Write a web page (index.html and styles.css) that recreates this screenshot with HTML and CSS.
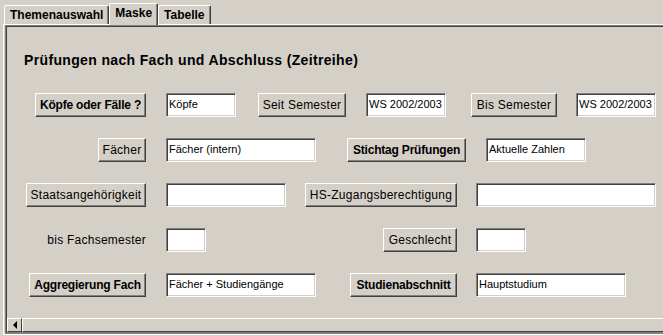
FILE: index.html
```html
<!DOCTYPE html>
<html lang="de">

<head>
    <meta charset="UTF-8" />
    <meta name="viewport" content="width=device-width, initial-scale=1.0" />
    <title>Maske</title>
    <link rel="stylesheet" href="styles.css">
</head>

<body>
    <!-- Reiter -->
    <div class="tabs">
        <div class="tab">Themenauswahl</div>
        <div class="tab active">Maske</div>
        <div class="tab">Tabelle</div>
    </div>

    <div class="pane">
        <div class="scroll">
            <div class="inner">
                <div class="view">
                    <h1 class="title">Prüfungen nach Fach und Abschluss (Zeitreihe)</h1>

                    <div class="rows">
                        <div class="row">
                            <div class="lead"><div class="btn bold w111">Köpfe oder Fälle ?</div></div>
                            <div class="field ml20 w70">Köpfe</div>
                            <div class="btn ml22 w88">Seit Semester</div>
                            <div class="field ml20 w80">WS 2002/2003</div>
                            <div class="btn ml25 w86">Bis Semester</div>
                            <div class="field ml19 w80">WS 2002/2003</div>
                        </div>

                        <div class="row">
                            <div class="lead"><div class="btn w48">Fächer</div></div>
                            <div class="field ml20 w150">Fächer (intern)</div>
                            <div class="btn bold ml31 w119">Stichtag Prüfungen</div>
                            <div class="field ml20 w100">Aktuelle Zahlen</div>
                        </div>

                        <div class="row">
                            <div class="lead"><div class="btn w120">Staatsangehörigkeit</div></div>
                            <div class="field ml20 w120"></div>
                            <div class="btn ml19 w152">HS-Zugangsberechtigung</div>
                            <div class="field ml19 w180"></div>
                        </div>

                        <div class="row">
                            <div class="lead"><span class="label">bis Fachsemester</span></div>
                            <div class="field ml20 w40"></div>
                            <div class="btn ml177 w74">Geschlecht</div>
                            <div class="field ml19 w50"></div>
                        </div>

                        <div class="row">
                            <div class="lead"><div class="btn bold w117">Aggregierung Fach</div></div>
                            <div class="field ml20 w150">Fächer + Studiengänge</div>
                            <div class="btn bold ml34 w107">Studienabschnitt</div>
                            <div class="field ml19 w150">Hauptstudium</div>
                        </div>
                    </div>
                </div>

                <!-- horizontale Bildlaufleiste -->
                <div class="hbar">
                    <div class="arrow"><span class="tri"></span></div>
                    <div class="thumb"></div>
                </div>
            </div>
        </div>
    </div>
</body>

</html>
```

FILE: styles.css
```css
* {
    margin: 0;
    padding: 0;
    box-sizing: border-box;
}

body {
    width: 663px;
    height: 336px;
    overflow: hidden;
    background-color: #d4d0c8;
    font-family: "Liberation Sans", Arial, sans-serif;
    font-size: 12px;
    color: #000;
}

/* Reiter */
.tabs {
    display: flex;
    align-items: flex-end;
    height: 24px;
    padding-left: 4px;
}

.tab {
    height: 19px;
    padding: 0 5px;
    line-height: 18px;
    font-weight: bold;
    border-top: 1px solid #fff;
    border-left: 1px solid #fff;
    border-right: 1px solid #404040;
    border-top-left-radius: 2px;
    border-top-right-radius: 2px;
    box-shadow: inset -1px 0 #808080;
}

.tab.active {
    position: relative;
    z-index: 1;
    height: 22px;
    margin-bottom: -1px;
    padding-top: 1px;
    line-height: 16px;
    background-color: #d4d0c8;
}

/* Inhalt (rechts abgeschnitten, daher ohne rechten Rand) */
.pane {
    margin-left: 3px;
    padding-left: 1px;
    border-top: 1px solid #fff;
    border-left: 1px solid #fff;
    border-bottom: 1px solid #fff;
}

.scroll {
    border: 1px solid;
    border-right: 0;
    border-color: #808080 #fff #808080 #808080;
}

.inner {
    border: 1px solid;
    border-right: 0;
    border-color: #404040 #d4d0c8 #808080 #404040;
}

.view {
    height: 291px;
    padding-top: 25px;
}

.title {
    padding-left: 17px;
    font-size: 14px;
    line-height: 16px;
    font-weight: bold;
    letter-spacing: 0.35px;
}

.rows {
    display: flex;
    flex-direction: column;
    gap: 21px;
    margin-top: 25px;
}

.row {
    display: flex;
    align-items: center;
    height: 24px;
}

.lead {
    display: flex;
    justify-content: flex-end;
    width: 139px;
}

.label {
    letter-spacing: 0.25px;
}

.btn {
    height: 24px;
    line-height: 22px;
    text-align: center;
    white-space: nowrap;
    letter-spacing: 0.25px;
    border: 1px solid;
    border-color: #fff #404040 #404040 #fff;
    box-shadow: inset -1px -1px #808080;
}

.btn.bold {
    font-weight: bold;
    letter-spacing: -0.2px;
}

.field {
    height: 24px;
    padding: 0 2px;
    line-height: 20px;
    font-size: 11px;
    white-space: nowrap;
    background-color: #fff;
    border: 1px solid;
    border-color: #808080 #fff #fff #808080;
    box-shadow: inset 1px 1px #404040, inset -1px -1px #d4d0c8;
}

/* Abstände */
.ml19 { margin-left: 19px; }
.ml20 { margin-left: 20px; }
.ml22 { margin-left: 22px; }
.ml25 { margin-left: 25px; }
.ml31 { margin-left: 31px; }
.ml34 { margin-left: 34px; }
.ml177 { margin-left: 177px; }

/* Breiten */
.w40 { width: 40px; }
.w48 { width: 48px; }
.w50 { width: 50px; }
.w70 { width: 70px; }
.w74 { width: 74px; }
.w80 { width: 80px; }
.w86 { width: 86px; }
.w88 { width: 88px; }
.w100 { width: 100px; }
.w107 { width: 107px; }
.w111 { width: 111px; }
.w117 { width: 117px; }
.w119 { width: 119px; }
.w120 { width: 120px; }
.w150 { width: 150px; }
.w152 { width: 152px; }
.w180 { width: 180px; }

/* Bildlaufleiste */
.hbar {
    display: flex;
    height: 14px;
}

.arrow {
    display: flex;
    align-items: center;
    justify-content: center;
    width: 15px;
    border-top: 1px solid #fff;
    border-left: 1px solid #fff;
    border-right: 1px solid #404040;
    border-bottom: 1px solid #404040;
}

.tri {
    width: 0;
    height: 0;
    border-top: 4px solid transparent;
    border-bottom: 4px solid transparent;
    border-right: 4px solid #000;
}

.thumb {
    flex: 1;
    border-top: 1px solid #fff;
    border-left: 1px solid #fff;
    border-bottom: 1px solid #404040;
}
```
